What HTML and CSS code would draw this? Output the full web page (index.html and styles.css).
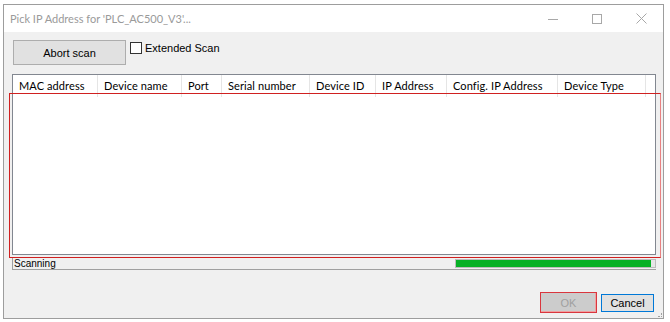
FILE: index.html
```html
<!DOCTYPE html>
<html lang="en">
<head>
  <meta charset="UTF-8">
  <title>Pick IP Address</title>
  <link rel="stylesheet" href="styles.css">
</head>
<body>
  <div class="window">
    <div class="titlebar">
      <span class="title">Pick IP Address for 'PLC_AC500_V3'...</span>
      <div class="controls">
        <span class="ctl">
          <svg width="10" height="10" viewBox="0 0 10 10"><path d="M0 5.5h10" stroke="#a8a8a8" stroke-width="1"/></svg>
        </span>
        <span class="ctl">
          <svg width="10" height="10" viewBox="0 0 10 10"><rect x="0.5" y="0.5" width="9" height="9" fill="none" stroke="#a8a8a8" stroke-width="1"/></svg>
        </span>
        <span class="ctl">
          <svg width="11" height="11" viewBox="0 0 11 11"><path d="M0.5 0.5l10 10M10.5 0.5l-10 10" stroke="#a8a8a8" stroke-width="1"/></svg>
        </span>
      </div>
    </div>
    <div class="dialog">
      <div class="toolbar">
        <button class="btn abort">Abort scan</button>
        <label class="check"><span class="box"></span>Extended Scan</label>
      </div>
      <div class="listview">
        <div class="header">
          <span class="col" style="width:85px">MAC address</span>
          <span class="col" style="width:84px">Device name</span>
          <span class="col" style="width:40px">Port</span>
          <span class="col" style="width:88px">Serial number</span>
          <span class="col" style="width:66px">Device ID</span>
          <span class="col" style="width:71px">IP Address</span>
          <span class="col" style="width:111px">Config. IP Address</span>
          <span class="col" style="width:88px">Device Type</span>
        </div>
      </div>
      <div class="status">
        <span class="status-text">Scanning</span>
        <div class="progress"><div class="progress-fill"></div></div>
      </div>
      <div class="footer">
        <button class="btn ok" disabled>OK</button>
        <button class="btn cancel">Cancel</button>
      </div>
      <span class="grip"></span>
      <div class="highlight"></div>
    </div>
  </div>
</body>
</html>
```

FILE: styles.css
```css
body { margin: 0; background: #fff; font-family: "Liberation Sans", Arial, sans-serif; }
.window {
  margin: 4px 0 0 3px;
  width: 659px;
  height: 313px;
  border: 1px solid #9d9d9d;
  display: flex;
  flex-direction: column;
}
.titlebar {
  height: 27px;
  background: #fff;
  display: flex;
  align-items: center;
  justify-content: space-between;
}
.title {
  padding-left: 6px;
  font-family: Lato, sans-serif;
  font-size: 11px;
  color: #9a9a9a;
}
.controls { display: flex; height: 100%; }
.ctl { width: 44px; display: flex; align-items: center; justify-content: center; }
.dialog {
  position: relative;
  flex: 1;
  background: #f0f0f0;
  display: flex;
  flex-direction: column;
  padding: 8px 0 5px 8px;
}
.toolbar { display: flex; align-items: flex-start; padding-left: 1px; }
.btn {
  font-family: "Liberation Sans", Arial, sans-serif;
  font-size: 11px;
  color: #000;
  background: #e1e1e1;
  border: 1px solid #adadad;
  padding: 0;
}
.abort { width: 113px; height: 25px; }
.check {
  display: flex;
  align-items: center;
  margin: 1px 0 0 4px;
  font-size: 11px;
  color: #000;
  height: 13px;
}
.box {
  width: 10px;
  height: 10px;
  border: 1px solid #333;
  background: #fff;
  margin-right: 3px;
}
.listview {
  margin-top: 9px;
  width: 642px;
  height: 179px;
  border: 1px solid #828790;
  background: #fff;
}
.header { display: flex; height: 22px; }
.col {
  box-sizing: border-box;
  height: 22px;
  padding: 4px 0 0 6px;
  border-right: 1px solid #e5e5e5;
  font-family: Lato, sans-serif;
  font-size: 11px;
  letter-spacing: 0.1px;
  color: #000;
  white-space: nowrap;
  overflow: hidden;
}
.status {
  margin-top: 2px;
  width: 643px;
  height: 12px;
  border-left: 1px solid #a0a0a0;
  border-bottom: 1px solid #a0a0a0;
  display: flex;
  align-items: center;
  justify-content: space-between;
}
.status-text { font-size: 10px; color: #000; padding-left: 1px; }
.progress {
  width: 199px;
  height: 7px;
  border: 1px solid #bcbcbc;
  background: #e6e6e6;
  padding: 0;
}
.progress-fill { width: 195px; height: 7px; background: #06b025; }
.footer {
  margin-top: auto;
  display: flex;
  justify-content: flex-end;
  align-items: flex-end;
  gap: 4px;
  padding-right: 9px;
}
.ok {
  width: 57px;
  height: 21px;
  background: #cccccc;
  color: #a0a0a0;
  border: 1px solid #d9363e;
  box-shadow: inset -1px -1px 0 #f0a0a0;
}
.cancel {
  width: 53px;
  height: 18px;
  margin-bottom: 1px;
  border: 1px solid #0078d7;
}
.grip {
  position: absolute;
  right: 1px;
  bottom: 1px;
  width: 3px;
  height: 3px;
  border-right: 1px dotted #a0a0a0;
  border-bottom: 1px dotted #a0a0a0;
}
.highlight {
  position: absolute;
  left: 5px;
  top: 61px;
  width: 650px;
  height: 163px;
  border: 1px solid #d02020;
  border-right-color: #e88080;
  pointer-events: none;
}
```
